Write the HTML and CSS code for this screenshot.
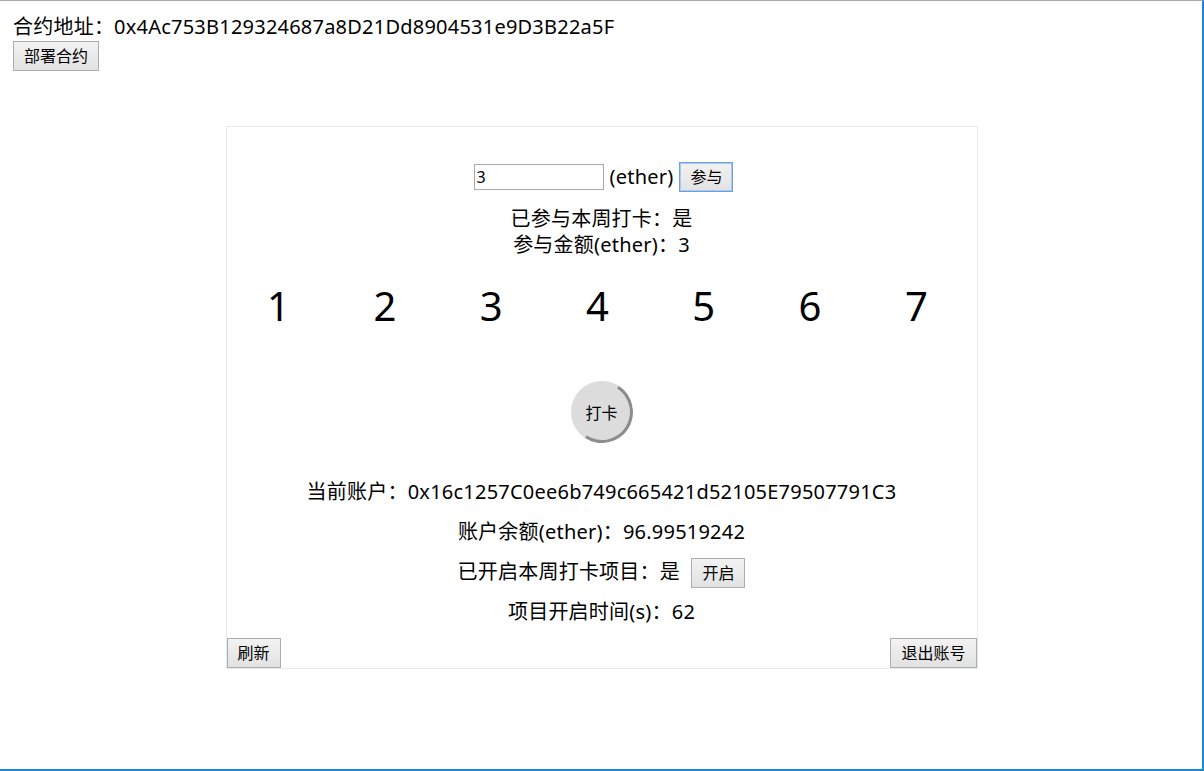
FILE: index.html
```html
<!DOCTYPE html>
<html lang="zh-CN">
<head>
<meta charset="utf-8">
<title>打卡</title>
<link rel="stylesheet" href="styles.css">
</head>
<body>
<div class="page">
  <div class="contract">
    <div class="contract-line">合约地址：0x4Ac753B129324687a8D21Dd8904531e9D3B22a5F</div>
    <button class="btn">部署合约</button>
  </div>

  <div class="card">
    <div class="join-row">
      <input class="amount" type="text" value="3">
      <span class="unit">(ether)</span>
      <button class="btn btn-focus">参与</button>
    </div>
    <div class="status">
      <div>已参与本周打卡：是</div>
      <div>参与金额(ether)：3</div>
    </div>
    <div class="days">
      <span class="day">1</span>
      <span class="day">2</span>
      <span class="day">3</span>
      <span class="day">4</span>
      <span class="day">5</span>
      <span class="day">6</span>
      <span class="day">7</span>
    </div>
    <div class="punch-wrap">
      <button class="punch">打卡</button>
    </div>
    <div class="info">
      <div class="info-row">当前账户：0x16c1257C0ee6b749c665421d52105E79507791C3</div>
      <div class="info-row">账户余额(ether)：96.99519242</div>
      <div class="info-row">已开启本周打卡项目：是 <button class="btn btn-open">开启</button></div>
      <div class="info-row">项目开启时间(s)：62</div>
    </div>
    <div class="bottom-row">
      <button class="btn">刷新</button>
      <button class="btn">退出账号</button>
    </div>
  </div>
</div>
</body>
</html>
```

FILE: styles.css
```css
html {
  height: 100%;
  box-sizing: border-box;
  border-top: 1px solid #ababab;
  border-right: 2px solid #1e87d4;
  border-bottom: 2px solid #1e87d4;
  background: #fff;
}

body {
  margin: 0;
  font-family: "Noto Sans", "Noto Sans CJK SC", sans-serif;
  font-size: 20px;
  letter-spacing: 0.22px;
  color: #000;
}

.page {
  padding: 12px 0 0 13px;
}

.contract-line {
  line-height: 27px;
}

.btn {
  font-family: "Noto Sans", "Noto Sans CJK SC", sans-serif;
  font-size: 16px;
  letter-spacing: 0;
  height: 30px;
  padding: 0 10px;
  margin: 0;
  border: 1px solid #adadad;
  border-radius: 0;
  background: linear-gradient(#f2f2f2, #e2e2e2);
  color: #000;
  line-height: 28px;
  vertical-align: middle;
}

.btn-focus {
  border-color: #6e9fe3;
  box-shadow: inset 0 0 0 1px #a9c8f2;
}

.card {
  width: 750px;
  margin: 55px auto 0;
  transform: translateX(-6px);
  border: 1px solid #e4ebf1;
}

.join-row {
  display: flex;
  justify-content: center;
  align-items: center;
  gap: 6px;
  padding: 35px 0 0 4px;
  height: 30px;
}

.amount {
  width: 130px;
  height: 26px;
  box-sizing: border-box;
  border: 1px solid #a9a9a9;
  padding: 0 2px;
  font-family: "Noto Sans", sans-serif;
  font-size: 16px;
  margin: 0;
}

.unit {
  line-height: 30px;
}

.status {
  margin-top: 14px;
  text-align: center;
  line-height: 26px;
}

.days {
  display: flex;
  margin: 24px 0 0 -1px;
  font-size: 40px;
  line-height: 48px;
}

.day {
  flex: 0 0 106.3px;
  text-align: center;
}

.punch-wrap {
  display: flex;
  justify-content: center;
  margin-top: 51px;
}

.punch {
  position: relative;
  width: 62px;
  height: 62px;
  border-radius: 50%;
  border: none;
  background: #dcdcdc;
  font-family: "Noto Sans CJK SC", sans-serif;
  font-size: 16px;
  color: #000;
  padding: 0;
}

.punch::after {
  content: "";
  position: absolute;
  inset: 0;
  border-radius: 50%;
  border: 3px solid transparent;
  border-right-color: #8c8c8c;
  border-bottom-color: #8c8c8c;
  transform: rotate(-12deg);
}

.info {
  margin-top: 34px;
  display: flex;
  flex-direction: column;
  gap: 10px;
}

.info-row {
  text-align: center;
  line-height: 30px;
  height: 30px;
}

.btn-open {
  margin-left: 6px;
}

.bottom-row {
  display: flex;
  justify-content: space-between;
  margin-top: 11px;
}
```
